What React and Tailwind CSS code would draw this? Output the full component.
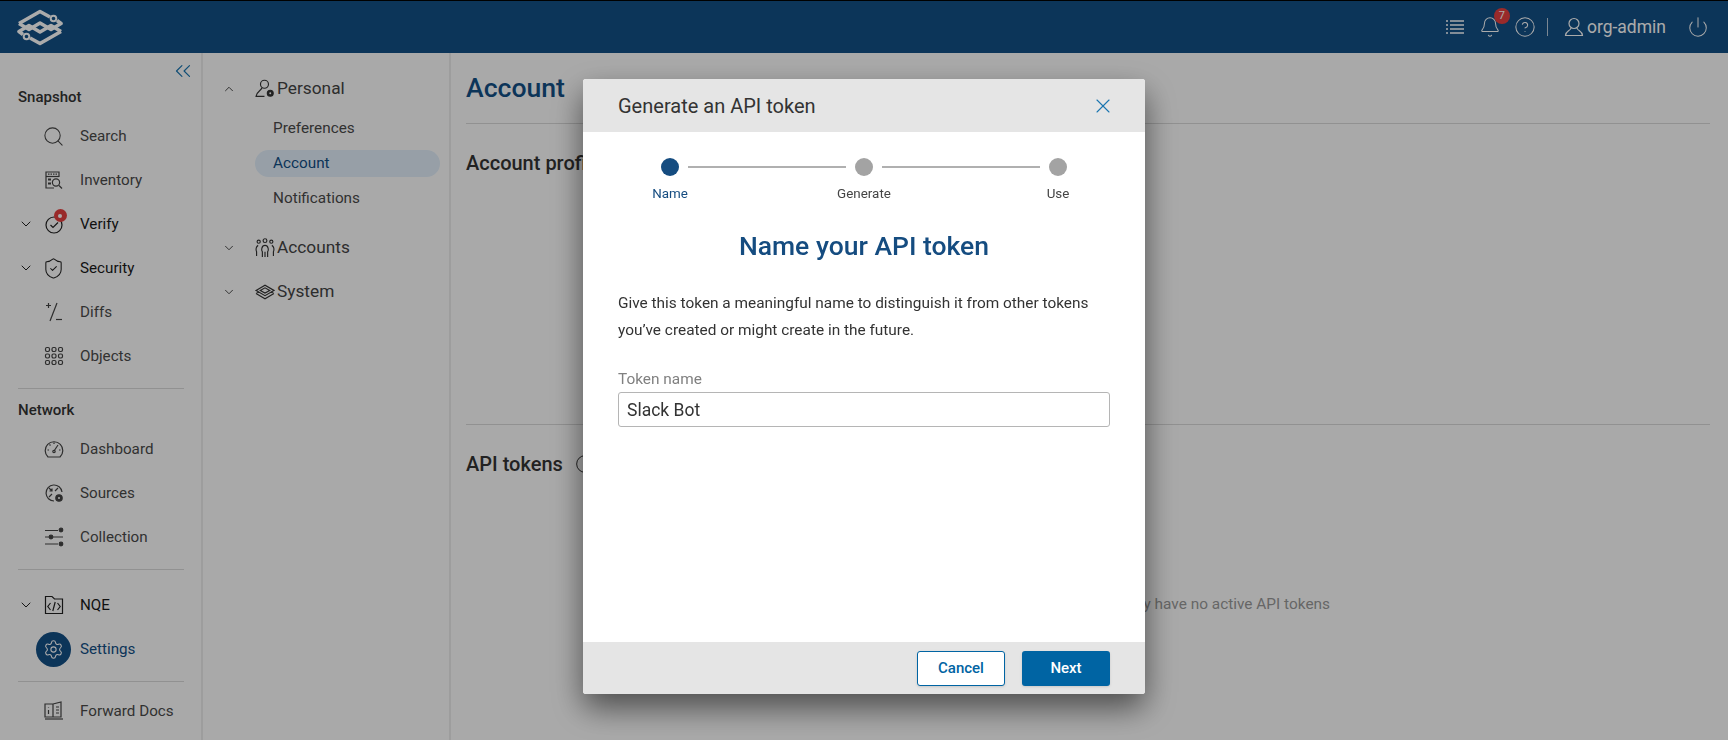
import React from 'react';
import {
  Search, ChevronDown, ChevronUp, ChevronsLeft, X, Bell, CircleHelp, Power,
  ShieldCheck, Settings, Info,
} from 'lucide-react';

const Logo = () => (
  <svg width="46" height="37" viewBox="0 0 46 36" fill="none" stroke="#fff" strokeWidth="3.6" strokeLinejoin="round">
    <path d="M2 14 L23 2 L33 7.500" />
    <path d="M2 14 L12 20 L23 13.500 L34 20 L44 14 L40 11" />
    <path d="M44 22 L23 34 L13 28.500" />
    <path d="M44 22 L34 16 L23 22.500 L12 16 L2 22 L6 25" />
    <circle cx="36.500" cy="9" r="2.800" strokeWidth="2" />
    <circle cx="9.500" cy="27" r="2.800" strokeWidth="2" />
  </svg>
);

const UserIcon = () => (
  <svg width="20" height="20" viewBox="0 0 20 20" fill="none" stroke="currentColor" strokeWidth="1.2">
    <circle cx="10" cy="6.500" r="5" />
    <path d="M7 11 C6.500 14 1.500 14 1.500 18.500 H18.500 C18.500 14 13.500 14 13 11" />
  </svg>
);

const InventoryIcon = () => (
  <svg width="20" height="20" viewBox="0 0 20 20" fill="none" stroke="currentColor" strokeWidth="1.2">
    <path d="M15 7V2H2v16h8" />
    <path d="M2 6.500h13" />
    <path d="M4 4.200h9" strokeDasharray="1.500 1" />
    <path d="M4 9.500h3M4 13.500h3" strokeWidth="2" />
    <circle cx="12" cy="12.500" r="3.600" />
    <path d="M15 15.500l3 3" />
  </svg>
);

const VerifyIcon = () => (
  <span className="relative flex h-5 w-5 items-center justify-center">
    <svg width="20" height="20" viewBox="0 0 20 20" fill="none" stroke="currentColor" strokeWidth="1.2">
      <circle cx="10" cy="11" r="8" />
      <path d="M6.500 11l2.500 2.500 5-5" />
    </svg>
    <span className="absolute -right-[3px] -top-[5px] flex h-[13px] w-[13px] items-center justify-center rounded-full bg-[#e53f3f]">
      <span className="h-1 w-1 rounded-full bg-white" />
    </span>
  </span>
);

const DiffsIcon = () => (
  <svg width="20" height="20" viewBox="0 0 20 20" fill="none" stroke="currentColor" strokeWidth="1.2">
    <path d="M2 3.500h5M4.500 1v5" />
    <path d="M13 1L6 19" />
    <path d="M12 17.500h6" />
  </svg>
);

const ObjectsIcon = () => (
  <svg width="20" height="20" viewBox="0 0 20 20" fill="none" stroke="currentColor" strokeWidth="1.2">
    {[3.5, 10, 16.5].map((y) =>
      [3.5, 10, 16.5].map((x) => <rect key={`${x}-${y}`} x={x - 2} y={y - 2} width="4" height="4" rx="1.4" />)
    )}
  </svg>
);

const GaugeIcon = () => (
  <svg width="20" height="20" viewBox="0 0 20 20" fill="none" stroke="currentColor" strokeWidth="1.2">
    <path d="M4 18 A8.800 8.800 0 1 1 16 18 Z" />
    <path d="M10 12 L14 6" />
    <circle cx="10" cy="12.500" r="1.200" />
    <path d="M10 3.500v1.500M5.500 5.500l1 1M3.500 11h1.500M15 11h1.500" />
  </svg>
);

const SourcesIcon = () => (
  <svg width="20" height="20" viewBox="0 0 20 20" fill="none" stroke="currentColor" strokeWidth="1.2">
    <path d="M18 9a8 8 0 1 0-8 9" />
    <path d="M5 5l3 3M8 5.500V8H5.500M14 5l-3 3M5 14l3-3" />
    <circle cx="15" cy="15" r="3.200" fill="currentColor" />
    <circle cx="15" cy="15" r="1" fill="#fff" stroke="none" />
  </svg>
);

const CollectionIcon = () => (
  <svg width="20" height="20" viewBox="0 0 20 20" fill="none" stroke="currentColor" strokeWidth="1.2">
    <path d="M1 3.500h13M1 10h4M9 10h10M1 17h13" />
    <circle cx="17" cy="3" r="1.800" fill="currentColor" />
    <circle cx="7" cy="10" r="1.800" fill="currentColor" />
    <circle cx="17" cy="17" r="1.800" fill="currentColor" />
  </svg>
);

const NqeIcon = () => (
  <svg width="20" height="20" viewBox="0 0 20 20" fill="none" stroke="currentColor" strokeWidth="1.2">
    <path d="M1.500 18.500V1.500H8L10.500 4H18.500V18.500Z" />
    <path d="M6.500 8L3.800 11.500L6.500 15M13.500 8L16.200 11.500L13.500 15M11.200 7L8.800 16" />
  </svg>
);

const DocsIcon = () => (
  <svg width="20" height="20" viewBox="0 0 20 20" fill="none" stroke="currentColor" strokeWidth="1.2">
    <path d="M1 3h8v13H1zM9 3l8-2v15l-8 0" />
    <path d="M1 18h18" />
    <path d="M4.500 6.500v.5M4.500 9v4M12 6h3M12 9h3M12 12h3" />
  </svg>
);

const PersonGear = () => (
  <svg width="20" height="20" viewBox="0 0 19 19" fill="none" stroke="currentColor" strokeWidth="1.1">
    <circle cx="9" cy="5" r="3.800" />
    <path d="M6.500 8.500C6 11 1.500 12 1 16.500h8" />
    <circle cx="14.500" cy="13.500" r="2.800" fill="currentColor" />
    <circle cx="14.500" cy="13.500" r="0.900" fill="#fff" stroke="none" />
  </svg>
);

const PeopleIcon = () => (
  <svg width="20" height="20" viewBox="0 0 19 19" fill="none" stroke="currentColor" strokeWidth="1.1">
    <circle cx="9.500" cy="2.500" r="1.800" />
    <circle cx="3.500" cy="3.500" r="1.500" />
    <circle cx="15.500" cy="3.500" r="1.500" />
    <path d="M7 18v-5c-1-1-1-6 2.500-6S13 12 12 13v5M9.500 13v5" />
    <path d="M3 7c-2 1-2.500 4-1.500 6v4M16 7c2 1 2.500 4 1.500 6v4" />
  </svg>
);

const LayersIcon = () => (
  <svg width="20" height="20" viewBox="0 0 19 19" fill="none" stroke="currentColor" strokeWidth="1.1">
    <path d="M1 8l8.500-5L18 8l-8.500 5z" />
    <path d="M5 8l4.500-2.500L14 8l-4.500 2.500z" />
    <path d="M1 11l3-1.500M18 11l-3-1.500M1 11l8.500 5L18 11" />
  </svg>
);

const navGroups = [
  {
    title: 'Snapshot',
    rows: [
      { label: 'Search', icon: <Search size={23} strokeWidth={1.1} /> },
      { label: 'Inventory', icon: <InventoryIcon /> },
      { label: 'Verify', icon: <VerifyIcon />, caret: true },
      { label: 'Security', icon: <ShieldCheck size={23} strokeWidth={1.1} />, caret: true },
      { label: 'Diffs', icon: <DiffsIcon /> },
      { label: 'Objects', icon: <ObjectsIcon /> },
    ],
  },
  {
    title: 'Network',
    rows: [
      { label: 'Dashboard', icon: <GaugeIcon /> },
      { label: 'Sources', icon: <SourcesIcon /> },
      { label: 'Collection', icon: <CollectionIcon /> },
    ],
  },
];

function NavRow({ label, icon, caret, active }) {
  return (
    <div className="flex h-11 items-center">
      <div className="flex w-[36px] justify-end">
        {caret && <ChevronDown size={16} strokeWidth={1.5} className="mr-[2px] text-[#222]" />}
      </div>
      <div className="flex w-[35px] shrink-0 justify-center">
        {active ? (
          <span className="flex h-[35px] w-[35px] items-center justify-center rounded-full bg-[#134f85] text-white">
            <Settings size={21} strokeWidth={1.2} />
          </span>
        ) : (
          <span className={`flex ${caret ? 'text-[#222]' : 'text-[#444]'}`}>{icon}</span>
        )}
      </div>
      <span className={`ml-[9px] text-[15.2px] ${active ? 'text-[#134f85]' : caret ? 'text-[#1a1a1a]' : 'text-[#4a4a4a]'}`}>
        {label}
      </span>
    </div>
  );
}

function Sidebar() {
  return (
    <aside className="flex w-[203px] shrink-0 flex-col border-r-2 border-[#ebebeb] pl-[18px] pr-[17px]">
      <div className="-mr-[12px] flex h-[31px] items-end justify-end text-[#1a75b0]">
        <ChevronsLeft size={26} strokeWidth={1.1} />
      </div>
      <div>
        <div className="flex h-[24px] items-end text-[15px] font-medium text-[#333]">Snapshot</div>
        <div className="-ml-[18px] mt-[6px]">
          {navGroups[0].rows.map((r) => <NavRow key={r.label} {...r} />)}
        </div>
      </div>
      <div className="mt-[10px] border-t border-[#d9d9d9] pt-[10px]">
        <div className="flex h-[22px] items-center text-[15px] font-medium text-[#333]">Network</div>
        <div className="-ml-[18px] mt-[6px]">
          {navGroups[1].rows.map((r) => <NavRow key={r.label} {...r} />)}
        </div>
      </div>
      <div className="mt-[10px] border-t border-[#d9d9d9] pt-[13px]">
        <div className="-ml-[18px]">
          <NavRow label="NQE" caret icon={<NqeIcon />} />
          <NavRow label="Settings" active />
        </div>
      </div>
      <div className="mt-[10px] border-t border-[#d9d9d9] pt-[7px]">
        <div className="-ml-[18px]">
          <NavRow label="Forward Docs" icon={<DocsIcon />} />
        </div>
      </div>
    </aside>
  );
}

function SettingsGroup({ open, icon, label }) {
  const Caret = open ? ChevronUp : ChevronDown;
  return (
    <div className="flex h-11 items-center text-[#333]">
      <Caret size={14} strokeWidth={1.5} className="ml-[19px] mr-[19px]" />
      {icon}
      <span className="ml-[2px] text-[17.3px] text-[#444]">{label}</span>
    </div>
  );
}

function SettingsNav() {
  return (
    <nav className="w-[248px] shrink-0 border-r-2 border-[#ebebeb] pr-[9px] pt-[14px]">
      <SettingsGroup open label="Personal" icon={<PersonGear />} />
      <div className="ml-[52px] mt-[4px] flex flex-col gap-[8px] text-[15.3px] text-[#4a4a4a]">
        <div className="flex h-[27px] items-center pl-[18px]">Preferences</div>
        <div className="flex h-[27px] items-center rounded-full bg-[#e1eefa] pl-[18px] text-[#134f85]">Account</div>
        <div className="flex h-[27px] items-center pl-[18px]">Notifications</div>
      </div>
      <div className="mt-[14px]">
        <SettingsGroup label="Accounts" icon={<PeopleIcon />} />
        <SettingsGroup label="System" icon={<LayersIcon />} />
      </div>
    </nav>
  );
}

function MainContent() {
  return (
    <main className="flex-1 pl-[15px] pr-[18px]">
      <h1 className="flex h-[71px] items-center border-b border-[#d9d9d9] text-[26.6px] font-medium text-[#134f85]">
        Account
      </h1>
      <h2 className="mt-[26px] text-[20px] font-medium leading-[26px] text-[#333]">Account profile</h2>
      <div className="mt-[248px] border-t border-[#d9d9d9] pt-[26px]">
        <div className="flex items-center gap-3 text-[20px] font-medium leading-[26px] text-[#333]">
          API tokens <Info size={20} strokeWidth={1.2} />
        </div>
        <p className="mt-[117px] pr-[380px] text-right text-[15.4px] leading-[20px] text-[#999]">
          You currently have no active API tokens
        </p>
      </div>
    </main>
  );
}

function Step({ label, active }) {
  return (
    <div className="flex w-[80px] flex-col items-center">
      <span className={`h-[18px] w-[18px] rounded-full ${active ? 'bg-[#154c80]' : 'bg-[#a3a3a3]'}`} />
      <span className={`mt-[9px] text-[13.4px] leading-[18px] ${active ? 'text-[#154c80]' : 'text-[#444]'}`}>{label}</span>
    </div>
  );
}

function TokenModal() {
  return (
    <div className="fixed inset-0 flex items-start justify-center bg-black/[0.33] pt-[79px]">
      <div className="flex h-[615px] w-[562px] flex-col overflow-hidden rounded-[3px] bg-white shadow-[0_14px_32px_rgba(0,0,0,0.55)]">
        <div className="flex h-[53px] shrink-0 items-center justify-between bg-[#e5e5e5] pl-[35px] pr-[30px]">
          <span className="pt-[1px] text-[20px] font-normal text-[#333]">Generate an API token</span>
          <X size={24} strokeWidth={1.1} className="text-[#1a75b0]" />
        </div>
        <div className="flex-1 px-[35px]">
          <div className="flex items-start justify-center pt-[26px]">
            <Step label="Name" active />
            <span className="-mx-[22px] mt-[8px] h-[2px] w-[158px] bg-[#b0b0b0]" />
            <Step label="Generate" />
            <span className="-mx-[22px] mt-[8px] h-[2px] w-[158px] bg-[#b0b0b0]" />
            <Step label="Use" />
          </div>
          <h3 className="mt-[27px] text-center text-[26.5px] font-medium leading-[32px] text-[#154c80]">
            Name your API token
          </h3>
          <p className="mt-[28px] text-[15.4px] leading-[27px] text-[#333]">
            Give this token a meaningful name to distinguish it from other tokens
            <br />
            you’ve created or might create in the future.
          </p>
          <label className="mt-[26px] block text-[15.4px] leading-[18px] text-[#808080]">Token name</label>
          <input
            readOnly
            value="Slack Bot"
            className="mt-[4px] block h-[35px] w-full rounded-[3px] border border-[#b5b5b5] px-[8px] text-[17.5px] text-[#333] outline-none"
          />
        </div>
        <div className="flex h-[52px] shrink-0 items-center justify-end gap-[17px] bg-[#e5e5e5] pr-[35px]">
          <button className="h-[35px] w-[88px] rounded-[3px] border border-[#0064a3] bg-white text-[15px] font-medium text-[#0064a3] shadow-sm">
            Cancel
          </button>
          <button className="h-[35px] w-[88px] rounded-[3px] bg-[#0064a3] text-[15px] font-medium text-white shadow-sm">
            Next
          </button>
        </div>
      </div>
    </div>
  );
}

export default function App() {
  return (
    <div className="flex h-screen flex-col overflow-hidden bg-[#fdfdfd] font-['Roboto',sans-serif]">
      <header className="flex h-[53px] shrink-0 items-center border-t border-black bg-[#134f85] pl-[17px] pr-[19px] text-white">
        <Logo />
        <div className="ml-auto flex items-center">
          <svg width="20" height="16" viewBox="0 0 20 16" stroke="currentColor" strokeWidth="1.3">
            <path d="M1 2h2M1 6h2M1 10h2M1 14h2" />
            <path d="M5 2h14M5 6h14M5 10h14M5 14h14" />
          </svg>
          <span className="relative ml-[14px] flex">
            <Bell size={22} strokeWidth={1.1} />
            <span className="absolute -right-[9px] -top-[8px] flex h-[16px] w-[16px] items-center justify-center rounded-full bg-[#e53f3f] text-[11px]">
              7
            </span>
          </span>
          <CircleHelp size={22} strokeWidth={1.1} className="ml-[13px]" />
          <span className="ml-[11px] h-[18px] w-px bg-white/70" />
          <span className="ml-[16px] flex"><UserIcon /></span>
          <span className="ml-[3px] text-[17.5px]">org-admin</span>
          <Power size={22} strokeWidth={1.1} className="ml-[21px]" />
        </div>
      </header>
      <div className="flex flex-1">
        <Sidebar />
        <SettingsNav />
        <MainContent />
      </div>
      <TokenModal />
    </div>
  );
}
